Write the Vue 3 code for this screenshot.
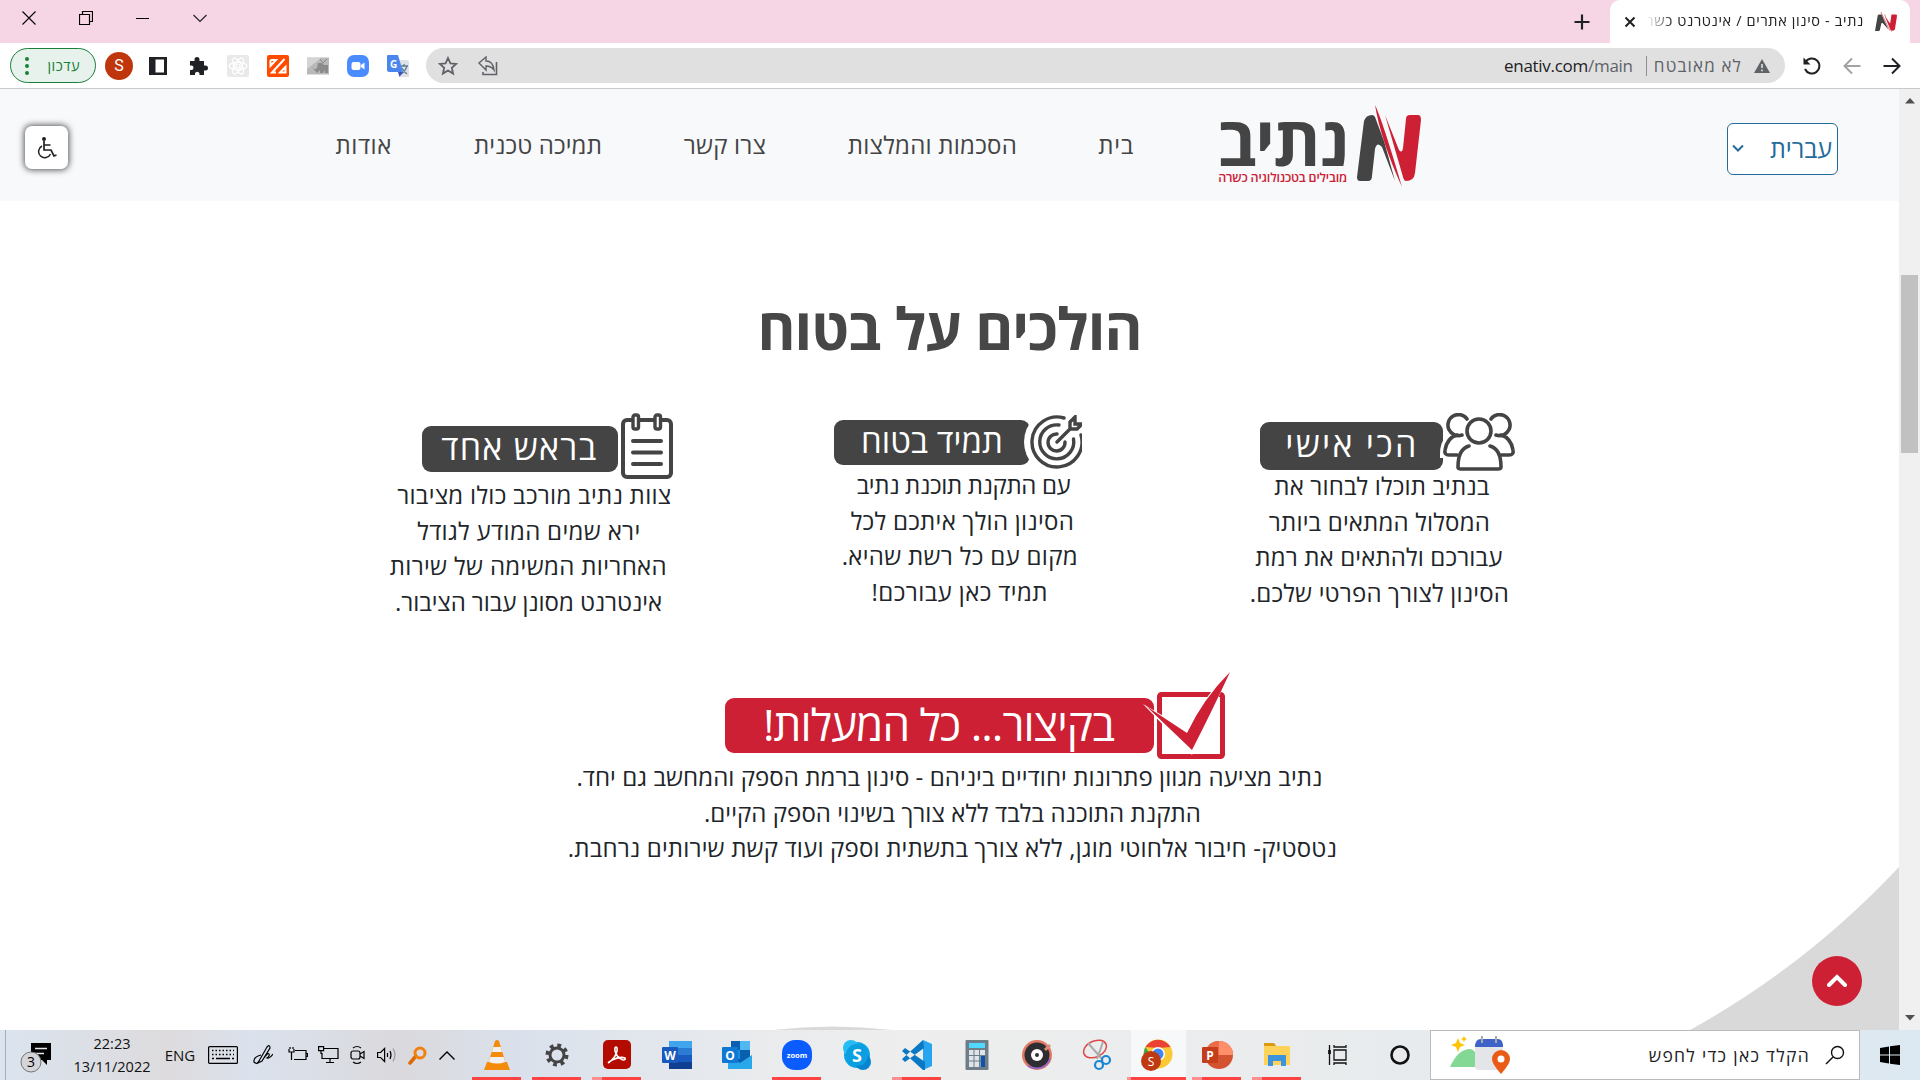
<script setup>
const vFit = {
  mounted(el, { value }) {
    const natural = el.getBoundingClientRect().width
    const count = [...el.textContent.trim()].length
    el.style.letterSpacing = (value - natural) / (count - 1) + 'px'
    el.style.width = value + 'px'
  }
}

const nav = [
  { text: 'בית', w: 35 },
  { text: 'הסכמות והמלצות', w: 169 },
  { text: 'צרו קשר', w: 82 },
  { text: 'תמיכה טכנית', w: 128 },
  { text: 'אודות', w: 56 }
]

const features = [
  {
    id: 'people', title: 'הכי אישי', w: 131,
    lines: [['בנתיב תוכלו לבחור את', 215, 6], ['המסלול המתאים ביותר', 221, 1], ['עבורכם ולהתאים את רמת', 247, 0], ['הסינון לצורך הפרטי שלכם.', 259, 1]]
  },
  {
    id: 'target', title: 'תמיד בטוח', w: 142,
    lines: [['עם התקנת תוכנת נתיב', 214, 7], ['הסינון הולך איתכם לכל', 223, 5], ['מקום עם כל רשת שהיא.', 236, 0], ['תמיד כאן עבורכם!', 176, 0]]
  },
  {
    id: 'pad', title: 'בראש אחד', w: 155,
    lines: [['צוות נתיב מורכב כולו מציבור', 274, 13], ['ירא שמים המודע לגודל', 223, 2], ['האחריות המשימה של שירות', 277, 1], ['אינטרנט מסונן עבור הציבור.', 267, 1]]
  }
]

const summary = [
  ['נתיב מציעה מגוון פתרונות יחודיים ביניהם - סינון ברמת הספק והמחשב גם יחד.', 746, 0],
  ['התקנת התוכנה בלבד ללא צורך בשינוי הספק הקיים.', 497, 6],
  ['נטסטיק- חיבור אלחוטי מוגן, ללא צורך בתשתית וספק ועוד קשת שירותים נרחבת.', 769, 6]
]

const apps = [
  { id: 'vlc', run: 'one' }, { id: 'gear', run: 'one' }, { id: 'acrobat', run: 'many' },
  { id: 'word' }, { id: 'outlook' }, { id: 'zoom', run: 'one' }, { id: 'skype' },
  { id: 'code', run: 'many' }, { id: 'calc' }, { id: 'groove' }, { id: 'snip' },
  { id: 'chrome', run: 'many active' }, { id: 'ppt', run: 'many' }, { id: 'explorer', run: 'many' },
  { id: 'taskview' }, { id: 'cortana' }
]
</script>

<template>
  <div class="screen" dir="rtl">
    <header class="tabs">
      <div class="tab">
        <svg class="fav" width="22" height="20" viewBox="0 0 64 82" preserveAspectRatio="none">
          <path d="M8 13q1-3 5-3h6l20 62-17-27q-4-1-4 4l-4 26q0 3-4 3H0z" fill="#444" />
          <path d="M17 0l26 76M28 10l20 70" stroke="#cd2034" stroke-width="2" />
          <path d="M48 10h12q4 0 4 5l-6 56q-1 6-7 6-4 0-6-5L30 20l14 27z" fill="#cd2034" />
        </svg>
        <span class="tab-title"><span v-fit="217">נתיב - סינון אתרים / אינטרנט כשר</span></span>
        <svg width="12" height="12" viewBox="0 0 12 12"><path d="M1.500 1.500l9 9M10.500 1.500l-9 9" stroke="#202124" stroke-width="2" /></svg>
      </div>
      <svg class="plus" width="16" height="16" viewBox="0 0 16 16"><path d="M8 .5v15M.5 8h15" stroke="#202124" stroke-width="2.200" /></svg>
      <div class="wincontrols">
        <svg width="14" height="14" viewBox="0 0 14 14"><path d="M.5 4l6.500 6.500L13.500 4" fill="none" stroke="#222" stroke-width="1.200" /></svg>
        <svg width="14" height="14" viewBox="0 0 14 14"><path d="M0 7.500h13" stroke="#000" /></svg>
        <svg width="14" height="14" viewBox="0 0 14 14"><path d="M.5 3.500h10v10H.5zM3.500 3.500v-3h10v10h-3" fill="none" stroke="#000" stroke-width="1.200" /></svg>
        <svg width="14" height="14" viewBox="0 0 14 14"><path d="M.5.5l13 13M13.500.5l-13 13" stroke="#000" stroke-width="1.100" /></svg>
      </div>
    </header>

    <div class="toolbar">
      <div class="history">
        <svg width="20" height="20" viewBox="0 0 20 20"><path d="M1.500 10h15M10 2.500l7.500 7.500-7.500 7.500" fill="none" stroke="#202124" stroke-width="2" /></svg>
        <svg width="20" height="20" viewBox="0 0 20 20"><path d="M18.500 10h-15M10 2.500L2.500 10l7.500 7.500" fill="none" stroke="#a3a3a3" stroke-width="2" /></svg>
        <svg width="20" height="20" viewBox="0 0 20 20"><path d="M3.500 6A7.500 7.500 0 1 1 3 13" fill="none" stroke="#202124" stroke-width="2" /><path d="M1.500 1.500v7h7z" fill="#202124" /></svg>
      </div>
      <div class="omnibox">
        <svg class="warn" width="16" height="14" viewBox="0 0 16 14"><path d="M8 0l8 14H0z" fill="#5f6368" /><path d="M8 5v4M8 10.500v1.700" stroke="#e0e0e0" stroke-width="1.600" /></svg>
        <span class="insecure" v-fit="87">לא מאובטח</span>
        <i class="sep"></i>
        <span class="url" dir="ltr" v-fit="129"><b>enativ.com</b>/main</span>
        <svg class="share" width="20" height="20" viewBox="0 0 20 20"><path d="M1 7l7-6v4q7 0 8 9-3-4-8-4v4z" fill="none" stroke="#5f6368" stroke-width="1.400" /><path d="M18.500 6v12.500H5V16" fill="none" stroke="#5f6368" stroke-width="1.600" /></svg>
        <svg class="star" width="20" height="20" viewBox="0 0 20 20"><path d="M10 2l2.400 5.400 5.800.5-4.400 3.900 1.300 5.800-5.100-3.100-5.100 3.100 1.300-5.800L1.800 7.900l5.800-.5z" fill="none" stroke="#5f6368" stroke-width="1.800" /></svg>
      </div>
      <div class="ext" dir="ltr">
        <svg viewBox="0 0 22 22"><path d="M2 2h18v18H2z" fill="#202124" /><path d="M8.500 4.500h8.500v13H8.500z" fill="#fff" /></svg>
        <svg viewBox="0 0 22 22"><path d="M3 6h4.500V4.500a2.500 2.500 0 0 1 5 0V6H17v4.500h1.500a2.500 2.500 0 0 1 0 5H17V20h-4.500v-1.500a2.300 2.300 0 0 0-4.500 0V20H3v-5h1.300a2.200 2.200 0 0 0 0-4.400H3z" fill="#202124" /></svg>
        <svg viewBox="0 0 22 22"><rect width="22" height="22" rx="2" fill="#e9e9e9" /><g fill="none" stroke="#fff" stroke-width="1.200"><ellipse cx="11" cy="11" rx="9" ry="3.700" /><ellipse cx="11" cy="11" rx="9" ry="3.700" transform="rotate(60 11 11)" /><ellipse cx="11" cy="11" rx="9" ry="3.700" transform="rotate(120 11 11)" /><circle cx="11" cy="11" r="2" /></g></svg>
        <svg viewBox="0 0 22 22"><rect width="22" height="22" rx="2" fill="#ff4a00" /><path d="M3.500 5v6l5.500-6H3.500M17.500 4L5 17.500h4M18.500 12v5.500H13z" fill="none" stroke="#fff" stroke-width="2" /></svg>
        <svg viewBox="0 0 22 22"><path d="M0 2.500h22v17H0z" fill="#b9b9b9" /><path d="M0 3h14L0 14z" fill="#d4d4d4" /><path d="M4 11q4 5 6 2l1-5h4l2 2h4v8h-3v-3l-2 3h-3v-3l-3 3z" fill="#8b8b8b" /><path d="M13 4l3 4 4-4" stroke="#888" fill="none" /></svg>
        <svg viewBox="0 0 22 22"><rect width="22" height="22" rx="7" fill="#4a8cff" /><rect x="4.500" y="7" width="9" height="8" rx="2" fill="#fff" /><path d="M14 10l3.500-2.500v7L14 12z" fill="#fff" /></svg>
        <svg viewBox="0 0 22 22"><path d="M8 5h12q2 0 2 2v15H13z" fill="#dfe1e5" /><path d="M13 11h8M17 9v2M20 11q-2 6-6 8M15 13q2 4 5 6" fill="none" stroke="#5b7f92" stroke-width="1.300" /><path d="M1 0h10l5 17H2q-2 0-2-2V1q0-1 1-1z" fill="#4a86ee" /><path d="M11 17h5l-3.500 5z" fill="#3a4fc0" /><text x="3" y="12.500" font-size="10" font-weight="700" fill="#fff" font-family="Open Sans">G</text></svg>
      </div>
      <span class="avatar">S</span>
      <div class="update">
        <span v-fit="32">עדכון</span>
        <svg width="4" height="18" viewBox="0 0 4 18"><g fill="#188038"><circle cx="2" cy="2" r="2" /><circle cx="2" cy="9" r="2" /><circle cx="2" cy="16" r="2" /></g></svg>
      </div>
    </div>

    <div class="viewport">
      <div class="scroll">
        <svg width="10" height="6" viewBox="0 0 10 6"><path d="M5 0l5 5.500H0z" fill="#505050" /></svg>
        <i class="thumb"></i>
        <svg class="down" width="10" height="6" viewBox="0 0 10 6"><path d="M0 0h10L5 5.500z" fill="#505050" /></svg>
      </div>
      <div class="page">
        <div class="site-head">
          <div class="lang">
            <span v-fit="62">עברית</span>
            <svg width="12" height="8" viewBox="0 0 12 8"><path d="M1 1.500l5 5 5-5" fill="none" stroke="#226b9a" stroke-width="2" /></svg>
          </div>
          <div class="logo">
            <svg width="64" height="82" viewBox="0 0 64 82">
              <path d="M7 16q2-6 8-6 2 0 3 2l9 24 11 40-13-34q-5-6-7 2l-3 27q0 5-4 5H3q-3 0-3-4z" fill="#444" />
              <path d="M18 0q7 14 27 82Q24 36 18 0z" fill="#cd2034" />
              <path d="M28 10l14 35q3 4 4-2l3-29q0-4 4-4h8q3 0 3 5l-6 53q-1 8-9 8-2 0-3-4z" fill="#cd2034" />
            </svg>
            <div class="wordmark">
              <strong><span v-fit="131">נתיב</span></strong>
              <small><span v-fit="129">מובילים בטכנולוגיה כשרה</span></small>
            </div>
          </div>
          <nav>
            <a v-for="n in nav" :key="n.text" v-fit="n.w">{{ n.text }}</a>
          </nav>
          <div class="access">
            <svg width="20" height="22" viewBox="0 0 20 22"><circle cx="7" cy="2" r="2" fill="#222" /><path d="M7 4v9h7l3 6 2.500-1M7.500 8h6" fill="none" stroke="#222" stroke-width="1.700" /><path d="M5 9a6.200 6.200 0 1 0 8.500 8" fill="none" stroke="#222" stroke-width="1.500" /></svg>
          </div>
        </div>

        <h1><span v-fit="385">הולכים על בטוח</span></h1>

        <div class="features">
          <section v-for="f in features" :key="f.id" :class="f.id">
            <div class="banner">
              <svg v-if="f.id === 'people'" class="ico" width="78" height="58" viewBox="0 0 78 58">
                <g fill="#fff" stroke="#fff" stroke-width="8"><circle cx="22" cy="13" r="11" /><path d="M6 41q0-18 17-20v20z" /></g>
                <g fill="none" stroke="#444" stroke-width="3.600" stroke-linecap="round">
                  <circle cx="41" cy="18" r="12" fill="#fff" />
                  <path d="M29 6a10.500 10.500 0 1 0-5 16M53 6a10.500 10.500 0 1 1 5 16" />
                  <path d="M19 22Q9 25 7 37q-1 5 4 5h8M63 22q10 3 12 15 1 5-4 5h-8" />
                  <path d="M31 33Q20 36 20 54q0 2 3 2h37q3 0 3-2 0-18-11-21" />
                </g>
              </svg>
              <svg v-else-if="f.id === 'target'" class="ico" width="58" height="54" viewBox="0 0 58 54">
                <circle cx="33" cy="27" r="33" fill="#fff" />
                <g fill="none" stroke="#444" stroke-width="3.400" stroke-linecap="round">
                  <path d="M40 3a25 25 0 1 0 17 17" /><path d="M35 10a17 17 0 1 0 14.500 14" /><path d="M33 19a8.500 8.500 0 1 0 8 8" />
                  <path d="M33 27L46 14M46 14V7l5-5v7h7l-5 5z" />
                </g>
              </svg>
              <svg v-else class="ico" width="52" height="66" viewBox="0 0 52 66">
                <g fill="none" stroke="#444" stroke-width="4" stroke-linecap="round">
                  <rect x="2" y="7" width="48" height="57" rx="4" /><path d="M12 28h28M12 39.500h28M12 51h28" />
                  <g fill="#fff" stroke-width="3.400"><rect x="12" y="2" width="5.500" height="14" rx="2" /><rect x="34" y="2" width="5.500" height="14" rx="2" /></g>
                </g>
              </svg>
              <div class="label"><span v-fit="f.w">{{ f.title }}</span></div>
            </div>
            <p v-for="l in f.lines" :key="l[0]" :style="{ paddingLeft: l[2] + 'px' }"><span v-fit="l[1]">{{ l[0] }}</span></p>
          </section>
        </div>

        <div class="summary">
          <div class="banner">
            <svg class="ico" width="86" height="88" viewBox="0 0 86 88">
              <rect x="16.500" y="21.500" width="63" height="62" rx="2" fill="#fff" stroke="#cd2034" stroke-width="5" />
              <path d="M0 31L44 57Q58 28 87-3 72 34 49 82z" fill="#fff" />
              <path d="M3 33l41 27Q60 26 87-1 70 36 49 77z" fill="#cd2034" />
            </svg>
            <div class="label"><span v-fit="352">בקיצור... כל המעלות!</span></div>
          </div>
          <p v-for="l in summary" :key="l[0]" :style="{ paddingLeft: l[2] + 'px' }"><span v-fit="l[1]">{{ l[0] }}</span></p>
        </div>

        <svg class="curves" width="1899" height="164" viewBox="0 0 1899 164"><path d="M1690 164Q1806 100 1899 1v163zM773 164q59-7 119 0z" fill="#d9d9d9" /></svg>
        <div class="top"><svg width="20" height="14" viewBox="0 0 20 14"><path d="M2 11l8-8 8 8" fill="none" stroke="#fff" stroke-width="4" stroke-linecap="round" /></svg></div>
      </div>
    </div>

    <footer class="taskbar" dir="ltr">
      <div class="tray t-note"><svg width="32" height="34" viewBox="0 0 32 34"><path d="M11 2h20v17h-4v5l-5-5H11z" /><path d="M15 7.500h12M15 12.500h9" stroke="#e3e8f0" stroke-width="1.300" /><circle cx="11" cy="21" r="10" fill="#d4d5d8" stroke="#777" /><text x="11" y="26" font-size="14" text-anchor="middle" font-family="Open Sans">3</text></svg></div>
      <div class="tray t-clock"><span>22:23</span><span>13/11/2022</span></div>
      <div class="tray t-lang"><span>ENG</span></div>
      <div class="tray t-40"><svg width="30" height="18" viewBox="0 0 30 18"><rect x=".6" y=".6" width="28.800" height="16.800" rx="1" fill="none" stroke="#000" stroke-width="1.200" /><path d="M4 4.500h22M4 8.500h22" stroke="#000" stroke-dasharray="1.500 2" stroke-width="1.500" /><path d="M4 12.500h2M8 12.500h14M24 12.500h2" stroke="#000" stroke-width="1.300" /></svg></div>
      <div class="tray t-40"><svg width="20" height="22" viewBox="0 0 20 22"><path d="M6 17L14 3q3-3 3 1L9 17l-4 2zM8 11q-8 2-7 7 3 3 5-1M11 14q4-6 5-4t-2 4q2 1 6-4" fill="none" stroke="#000" stroke-width="1.200" /></svg></div>
      <div class="tray t-30"><svg width="20" height="16" viewBox="0 0 20 16"><path d="M7 3.500h11v9H6M18.500 6.500h1v3h-1M1 2v3h5V2M2 0v2M5 0v2M3.500 5v8" fill="none" stroke="#000" stroke-width="1.200" /></svg></div>
      <div class="tray t-30"><svg width="21" height="18" viewBox="0 0 21 18"><path d="M6 2.500h14v10H4V7M12 13v3M8 16.500h8M.6.6h5v4h-5zM3 5v3" fill="none" stroke="#000" stroke-width="1.200" /></svg></div>
      <div class="tray t-30"><svg width="16" height="20" viewBox="0 0 16 20"><rect x="1" y="6" width="9" height="8" rx="2" fill="none" stroke="#000" stroke-width="1.200" /><path d="M10 9l4-2.500v7L10 11M3 3q4-3 8 0M3 17q4 3 8 0" fill="none" stroke="#000" stroke-width="1.200" /></svg></div>
      <div class="tray t-27"><svg width="20" height="18" viewBox="0 0 20 18"><path d="M.6 6.500h3l4-4v13l-4-4h-3z" fill="none" stroke="#000" stroke-width="1.200" /><path d="M10.500 7v4M13 5q2 4 0 8" fill="none" stroke="#000" stroke-width="1.200" /><path d="M16 2.500q4 6.500 0 13" fill="none" stroke="#999" stroke-width="1.200" /></svg></div>
      <div class="tray t-34"><svg width="19" height="19" viewBox="0 0 19 19"><path d="M2 17l6-7" stroke="#d96b00" stroke-width="3.500" stroke-linecap="round" /><circle cx="12" cy="7" r="5" fill="none" stroke="#f08010" stroke-width="3" /></svg></div>
      <div class="tray t-26"><svg width="16" height="9" viewBox="0 0 16 9"><path d="M.5 8.500L8 1l7.500 7.500" fill="none" stroke="#000" stroke-width="1.400" /></svg></div>

      <div class="apps">
        <div v-for="a in apps" :key="a.id" class="app" :class="[a.id, a.run]">
          <svg width="32" height="32" viewBox="0 0 32 32">
            <g v-if="a.id === 'vlc'"><path d="M6 23h20l3 8H3z" fill="#f48b0b" /><path d="M14 2q2-2 4 0l7 23q-9 5-18 0z" fill="#f48b0b" /><path d="M12.300 8h7.400l1.500 5H10.800zM9.300 18h13.400l1.500 5q-8 3-16.400 0z" fill="#f1f1f1" /></g>
            <g v-else-if="a.id === 'gear'" fill="none" stroke="#444"><circle cx="16" cy="16" r="7" stroke-width="3" /><circle cx="16" cy="16" r="9.500" stroke-width="4" stroke-dasharray="3.730" /></g>
            <g v-else-if="a.id === 'acrobat'"><rect x="2" y="1" width="28" height="29" rx="5" fill="#b30b00" /><path d="M8 23q6-3 8-11 .5-4-1-4t-1 4q2 7 8 9 3 0 2-2-5-2-13 2-5 4-3 2z" fill="none" stroke="#fff" stroke-width="1.600" /></g>
            <g v-else-if="a.id === 'word'"><path d="M8 2h23v28H8z" fill="#2b7cd3" /><path d="M8 2h23v7H8z" fill="#41a5ee" /><path d="M8 16h23v7H8z" fill="#185abd" /><path d="M8 23h23v7H8z" fill="#103f91" /><rect x="1" y="8" width="16" height="16" rx="1" fill="#185abd" /><text x="9" y="20.500" font-size="12">W</text></g>
            <g v-else-if="a.id === 'outlook'"><path d="M10 2h19v26H10z" fill="#0a5fae" /><path d="M19 2h10v9H19z" fill="#50b8f0" /><path d="M10 11h9v9h-9z" fill="#1490df" /><path d="M7 16l12 8 12-8v14H7z" fill="#28a8ea" /><rect x="1" y="8" width="16" height="16" rx="1" fill="#0f78d4" /><text x="9" y="20.500" font-size="12">O</text></g>
            <g v-else-if="a.id === 'zoom'"><rect x="1" y="1" width="30" height="30" rx="13" fill="#0b5cff" /><text x="16" y="18.500" font-size="7.600">zoom</text></g>
            <g v-else-if="a.id === 'skype'"><circle cx="16" cy="16" r="13" fill="#0aa5e5" /><circle cx="10" cy="9" r="8" fill="#25bdf3" /><circle cx="22" cy="23" r="8" fill="#0785d0" /><circle cx="16" cy="16" r="11" fill="#0b9ee0" /><text x="16" y="22.500" font-size="18">S</text></g>
            <g v-else-if="a.id === 'code'"><path d="M22 1l9 4v22l-9 4z" fill="#27a5ef" /><path d="M22 1L1 20l3 3L23 9zM1 12l3-3 20 14v8h-2z" fill="#0a78c4" /></g>
            <g v-else-if="a.id === 'calc'"><rect x="4.500" y="1" width="23" height="30" rx="1" fill="#6f7d88" /><path d="M8 4h16v5H8z" fill="#50d9ff" /><path d="M8 11h16v17H8z" fill="#dfe4e8" /><path d="M8 16.500h16M8 22h16M13 11v17M18.500 11v17" stroke="#6f7d88" /><path d="M19.500 17H24v11h-4.500z" fill="#1252a0" /></g>
            <g v-else-if="a.id === 'groove'"><circle cx="16" cy="16" r="15" fill="#e07a62" /><path d="M30 19a15 15 0 0 1-24 8z" fill="#9a64c8" /><circle cx="16" cy="16" r="12.500" fill="#2e2e32" /><circle cx="16" cy="16" r="6" fill="#fff" /><circle cx="16" cy="16" r="2" fill="#333" /><path d="M24 11l5-5" stroke="#d98c7a" stroke-width="3" /></g>
            <g v-else-if="a.id === 'snip'" fill="none"><ellipse cx="14" cy="10" rx="12" ry="8" transform="rotate(-25 14 10)" stroke="#e04848" stroke-width="1.500" /><path d="M7 4l14 16M22 3l-6 17" stroke="#aaa" stroke-width="2" /><circle cx="25" cy="21" r="4" stroke="#1b87d3" stroke-width="2.200" /><circle cx="18" cy="26" r="4" stroke="#1b87d3" stroke-width="2.200" /></g>
            <g v-else-if="a.id === 'chrome'"><circle cx="17" cy="15" r="14.500" fill="#fcc934" /><path d="M4.500 8A14.500 14.500 0 0 1 29.500 8L17 9z" fill="#ea4335" /><path d="M4.500 8L12 20l5 9.500A14.500 14.500 0 0 1 4.500 8z" fill="#34a853" /><circle cx="17" cy="15" r="7" fill="#fff" /><circle cx="17" cy="15" r="5.500" fill="#4285f4" /><circle cx="10" cy="22" r="10" fill="#bf3a12" /><text x="10" y="26.500" font-size="12" class="thin">S</text></g>
            <g v-else-if="a.id === 'ppt'"><circle cx="18" cy="16" r="14" fill="#d35230" /><path d="M18 2a14 14 0 0 1 14 14H18z" fill="#ff8f6b" /><path d="M4 16a14 14 0 0 1 14-14v14z" fill="#ed6c47" /><rect x="1" y="8" width="16" height="16" rx="1" fill="#c43e1c" /><text x="9" y="20.500" font-size="12">P</text></g>
            <g v-else-if="a.id === 'explorer'"><path d="M3 4h10l3 4H3z" fill="#d99a10" /><path d="M3 7h26v19H3z" fill="#ffd35a" /><path d="M7 27V16h18v11h-5v-5h-8v5z" fill="#3c94dc" /></g>
            <g v-else-if="a.id === 'taskview'" fill="none" stroke="#111" stroke-width="1.300"><path d="M10 11h12v10H10zM10 6v2h12V6M10 26v-2h12v2M5.500 6v5M5.500 15v11" /><path d="M5.500 11v4" stroke-width="2.800" /></g>
            <circle v-else cx="16" cy="16" r="8.500" fill="none" stroke="#111" stroke-width="2.600" />
          </svg>
        </div>
      </div>

      <div class="search" dir="rtl">
        <svg width="20" height="20" viewBox="0 0 20 20"><circle cx="12.500" cy="7.500" r="6" fill="none" stroke="#111" stroke-width="1.400" /><path d="M8 12l-7 7" stroke="#111" stroke-width="1.400" /></svg>
        <span v-fit="160">הקלד כאן כדי לחפש</span>
        <svg class="art" width="60" height="40" viewBox="0 0 60 40"><path d="M0 32q8-18 20-18 8 1 8 18z" fill="#84d896" /><rect x="25" y="9" width="28" height="26" rx="4" fill="#e3e5e8" /><path d="M25 12q0-8 6-8h17q5 0 5 8z" fill="#3d63c9" /><path d="M32 1v7M46 1v7" stroke="#aaa" stroke-width="2" /><path d="M8 3l2 5 5 2-5 2-2 5-2-5-5-2 5-2zM14 1l1 2 2 1-2 1-1 2-1-2-2-1 2-1z" fill="#ffc400" /><path d="M51 39q-9-10-9-15a9 9 0 0 1 18 0q0 5-9 15z" fill="#e85c16" /><circle cx="51" cy="24" r="3.500" fill="#fff" /></svg>
      </div>
      <div class="start"><svg width="20" height="20" viewBox="0 0 20 20"><path d="M0 3l9-1.500V9.500H0zM10 1.300L20 0v9.500H10zM0 10.500h9v8L0 17zM10 10.500h10V20l-10-1.300z" /></svg></div>
    </footer>
  </div>
</template>

<style>
body { overflow: hidden; }
</style>

<style scoped>
* { box-sizing: border-box; }
svg { display: block; flex: none; }
.screen { width: 1920px; height: 1080px; display: flex; flex-direction: column; background: #fff; font-family: "Open Sans", "Liberation Sans", sans-serif; overflow: hidden; }
span, a { white-space: nowrap; display: inline-block; }

.tabs { height: 43px; background: #f6d6e4; display: flex; align-items: center; padding-right: 10px; }
.tab { width: 300px; height: 43px; background: #fff; border-radius: 10px 10px 0 0; display: flex; align-items: center; padding-right: 13px; }
.tab-title { margin: 0 11px 0 11px; padding-bottom: 1px; font-size: 14.500px; color: #202124; line-height: 20px; width: 217px; -webkit-mask-image: linear-gradient(to right, transparent, #000 26px); mask-image: linear-gradient(to right, transparent, #000 26px); }
.plus { margin-right: 20px; }
.wincontrols { display: flex; gap: 43px; margin-right: auto; padding-left: 22px; margin-top: -7px; }

.toolbar { height: 46px; border-bottom: 1px solid #c9c9cb; display: flex; align-items: center; }
.history { display: flex; gap: 20px; margin-right: 18px; }
.omnibox { width: 1359px; height: 35px; margin-right: 17px; border-radius: 18px; background: #e0e0e0; display: flex; align-items: center; font-size: 17px; color: #5f6368; }
.warn { margin-right: 15px; }
.insecure { margin-right: 12px; }
.sep { width: 1px; height: 20px; background: #8d8f92; margin: 0 8px 0 13px; }
.url b { color: #202124; font-weight: 400; }
.share { margin-right: auto; }
.star { margin: 0 20px 0 12px; }
.ext { display: flex; gap: 18px; margin-right: 17px; }
.ext svg { width: 22px; height: 22px; }
.avatar { width: 28px; height: 28px; border-radius: 50%; background: #bf360c; color: #fff; font: 16px/28px Roboto, sans-serif; text-align: center; margin-right: 14px; }
.update { width: 86px; height: 35px; margin-right: 9px; border: 1.500px solid #188038; border-radius: 18px; background: #e8f2ec; color: #188038; display: flex; align-items: center; justify-content: space-between; padding: 0 15px 0 14px; font-size: 14.500px; }

.viewport { height: 941px; display: flex; }
.scroll { width: 21px; background: #f0f0f0; display: flex; flex-direction: column; align-items: center; padding: 9px 0; }
.thumb { width: 17px; height: 178px; background: #c1c1c1; margin-top: 171px; }
.down { margin-top: auto; }
.page { width: 1899px; position: relative; overflow: hidden; }
.site-head { height: 112px; background: #f8f9fb; display: flex; padding-right: 61px; }
.lang { width: 111px; height: 52px; margin-top: 34px; background: #fff; border: 1.500px solid #226b9a; border-radius: 6px; color: #226b9a; font-size: 25px; display: flex; align-items: center; justify-content: space-between; padding: 0 5px 2px 4px; }
.logo { display: flex; margin: 15px 306px 0 0; }
.logo svg { margin-top: 1px; }
.wordmark { width: 129px; margin-right: 10px; }
.wordmark strong { display: block; height: 64px; margin-top: 4px; font-size: 68px; line-height: 64px; color: #444; }
.wordmark small { display: block; font-size: 12.500px; line-height: 16px; margin-top: -2px; color: #cd2034; font-weight: 600; }
nav { display: flex; gap: 82px; margin-right: 84px; padding-top: 39px; font-size: 24px; line-height: 34px; color: #444; }
.access { width: 43px; height: 43px; margin: 37px auto 0 25px; background: #fff; border-radius: 7px; box-shadow: 0 0 6px 1px #555; display: flex; align-items: center; justify-content: center; }

h1 { margin: 87px 0 0; text-align: center; font-size: 58px; line-height: 80px; font-weight: 700; color: #474747; }
.features { display: flex; margin-top: 46px; padding-right: 370px; height: 254px; }
section { width: 300px; text-align: center; color: #212529; }
.target { margin-right: 119px; }
.pad { margin-right: 132px; }
p { margin: 0; font-size: 24px; line-height: 35.500px; color: #212529; text-align: center; }
.banner { display: flex; align-items: flex-start; }
.ico { position: relative; z-index: 1; }
.label { background: #444; color: #fff; border-radius: 9px; display: flex; align-items: center; justify-content: center; font-size: 34px; line-height: 40px; padding-bottom: 4px; }
.people .banner { padding-right: 13px; height: 54px; }
.people .ico { margin-left: -5px; margin-top: -1px; }
.people .label { width: 183px; height: 48px; margin-top: 8px; padding-right: 0; padding-left: 3px; }
.target .banner { padding-right: 28px; height: 53px; }
.target .ico { margin-top: 1px; }
.target .label { width: 196px; height: 45px; margin: 6px -6px 0 0; font-size: 33px; }
.pad .banner { padding-right: 5px; height: 63px; }
.pad .ico { margin-top: -1px; }
.pad .label { width: 196px; height: 46px; margin: 12px 3px 0 0; }

.summary { margin-top: 5px; }
.summary .banner { padding-right: 670px; height: 86px; }
.summary .label { background: #cd2034; width: 429px; height: 55px; margin: 25px -11px 0 0; font-size: 44px; line-height: 50px; padding-right: 3px; }
.summary .ico { overflow: visible; }

.curves { position: absolute; left: 0; bottom: 0; }
.top { position: absolute; right: 37px; bottom: 24px; width: 50px; height: 50px; border-radius: 50%; background: #cd2034; display: flex; align-items: center; justify-content: center; }

.taskbar { height: 50px; display: flex; align-items: stretch; background: linear-gradient(90deg, #dbe4ef 0, #dddbdd 170px, #dbe2ed 250px, #dad9dd 400px, #dae1ec 520px, #e9ebed 760px, #eeeeee 900px, #e8ebed 1400px, #dce8f1 1920px); padding-left: 5px; }
.tray { display: flex; align-items: center; justify-content: center; font-size: 14.500px; color: #111; }
.tray svg { margin-left: 2px; }
.t-note { width: 61px; border-left: 1px solid #a9afb8; padding: 6px 2px 0 0; }
.t-clock { width: 92px; flex-direction: column; line-height: 23px; }
.t-lang { width: 44px; font-size: 15px; }
.t-40 { width: 40px; }
.t-30 { width: 30px; }
.t-27 { width: 27px; }
.t-34 { width: 34px; }
.t-26 { width: 26px; }
.apps { display: flex; margin-left: 7px; }
.app { width: 60px; display: flex; align-items: center; justify-content: center; padding-left: 2px; }
.app text { font-family: "Open Sans", sans-serif; font-weight: 700; fill: #fff; text-anchor: middle; }
.app text.thin { font-weight: 400; }
.one { background: linear-gradient(#ff4343, #ff4343) 6px 47px / 49px 3px no-repeat; }
.many { background: linear-gradient(90deg, #ff8f8f 10px, #ff4343 10px) 6px 47px / 49px 3px no-repeat; }
.active { background: linear-gradient(90deg, #ff8f8f 4px, #ff4343 4px) 1px 47px / 59px 3px no-repeat, linear-gradient(#f6f8fa, #f6f8fa) 5px 0 / 55px 47px no-repeat; }
.taskview, .cortana { padding-left: 8px; }
.search { margin-left: 4px; width: 430px; border: 1px solid #bbb; background: #fff; display: flex; align-items: center; padding: 0 14px 0 19px; font-size: 17.500px; color: #222; }
.search span { margin-right: 15px; }
.art { margin-right: auto; }
.start { flex: 1; display: flex; align-items: center; justify-content: center; }
</style>
